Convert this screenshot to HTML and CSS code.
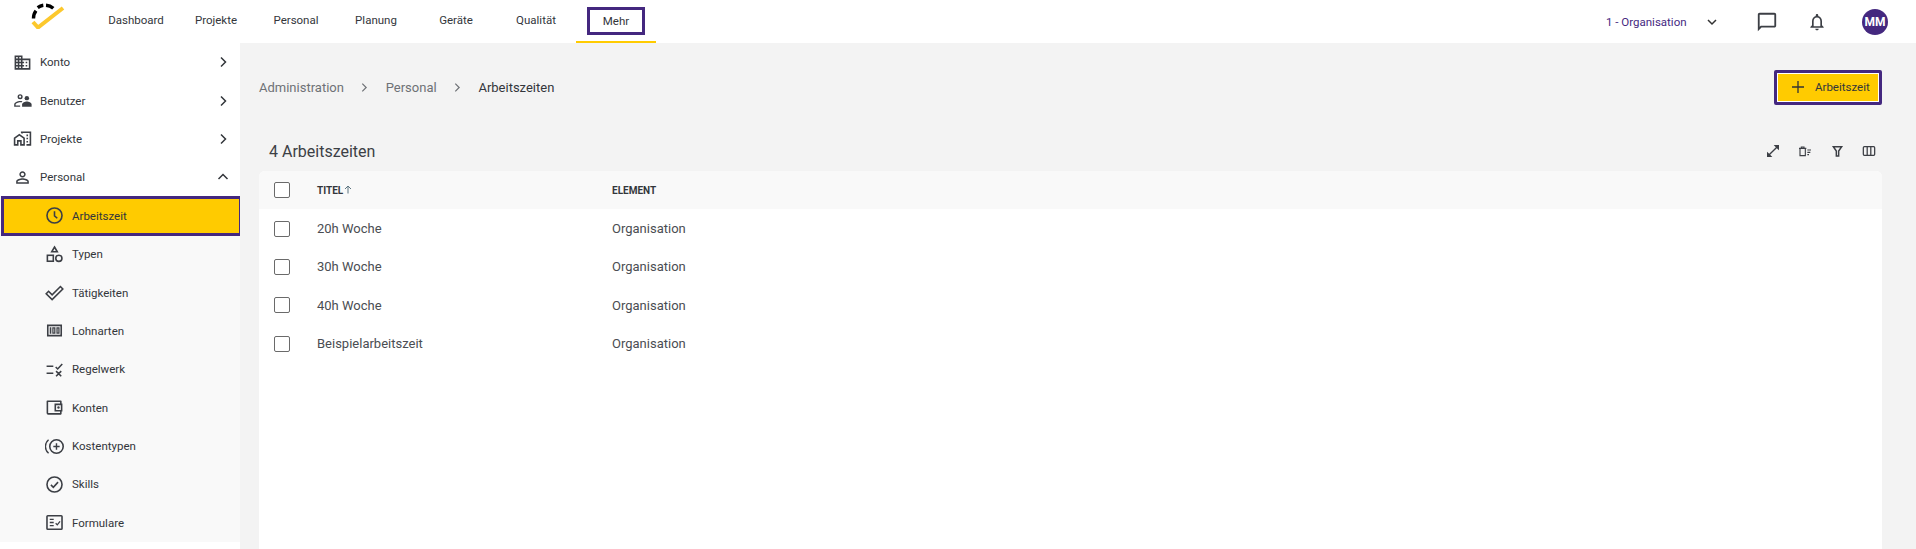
FILE: index.html
```html
<!DOCTYPE html>
<html lang="en">
<head>
  <meta charset="UTF-8">
  <title>Arbeitszeiten</title>
  <link rel="stylesheet" href="styles.css">
</head>
<body>

  <header class="topbar">
    <div class="logo">
      <svg width="34" height="26" viewBox="0 0 34 26" fill="none">
        <path d="M2.500 15.500 A12 12 0 0 1 5 7.700" stroke="#000" stroke-width="3.400"/>
        <path d="M6.700 4.600 A12 12 0 0 1 12.300 2.300" stroke="#000" stroke-width="3.400"/>
        <path d="M15 2.200 A12 12 0 0 1 22.300 5.300" stroke="#000" stroke-width="3.400"/>
        <path d="M2 19 L7 24.500 L32 5" stroke="#fcc82d" stroke-width="4"/>
      </svg>
    </div>
    <nav class="tabs">
      <div class="tab">Dashboard</div>
      <div class="tab">Projekte</div>
      <div class="tab">Personal</div>
      <div class="tab">Planung</div>
      <div class="tab">Geräte</div>
      <div class="tab">Qualität</div>
      <div class="tab tab-active"><span class="tab-box">Mehr</span></div>
    </nav>
    <div class="top-right">
      <div class="org">1 - Organisation</div>
      <svg class="org-arrow" width="14" height="14" viewBox="0 0 14 14" fill="none"><path d="M3 5 L7 9 L11 5" stroke="#333" stroke-width="1.500"/></svg>
      <svg class="chat" width="22" height="22" viewBox="0 0 24 24"><path fill="#3c3f45" d="M20 2H4c-1.100 0-2 .900-2 2v18l4-4h14c1.100 0 2-.900 2-2V4c0-1.100-.900-2-2-2zm0 14H5.170L4 17.170V4h16v12z"/></svg>
      <svg class="bell" width="20" height="20" viewBox="0 0 24 24"><path fill="#3c3f45" d="M12 22c1.100 0 2-.900 2-2h-4c0 1.100.900 2 2 2zm6-6v-5c0-3.070-1.630-5.640-4.500-6.320V4c0-.830-.670-1.500-1.500-1.500s-1.500.670-1.500 1.500v.680C7.640 5.360 6 7.920 6 11v5l-2 2v1h16v-1l-2-2zm-2 1H8v-6c0-2.480 1.510-4.500 4-4.500s4 2.020 4 4.500v6z"/></svg>
      <div class="avatar">MM</div>
    </div>
  </header>

  <div class="page">
    <aside class="sidebar">
      <div class="side-item">
        <svg class="side-icon" viewBox="0 0 24 24"><path d="M12 7V3H2v18h20V7H12zM6 19H4v-2h2v2zm0-4H4v-2h2v2zm0-4H4V9h2v2zm0-4H4V5h2v2zm4 12H8v-2h2v2zm0-4H8v-2h2v2zm0-4H8V9h2v2zm0-4H8V5h2v2zm10 12h-8v-2h2v-2h-2v-2h2v-2h-2V9h8v10zm-2-8h-2v2h2v-2zm0 4h-2v2h2v-2z"/></svg>
        <span class="side-label">Konto</span>
        <svg class="side-arrow" viewBox="0 0 14 14"><path d="M5 2.500 L9.500 7 L5 11.500"/></svg>
      </div>
      <div class="side-item">
        <svg class="side-icon" viewBox="0 0 24 24"><path fill-rule="evenodd" d="M9 4a3.200 3.200 0 1 0 0 6.400A3.200 3.200 0 0 0 9 4zm0 1.800a1.400 1.400 0 1 1 0 2.800 1.400 1.400 0 0 1 0-2.800z"/><path d="M9 12.500c-3 0-7.500 1.800-7.500 4.500v3H9v-1.800H3.300V17c0-1 3.400-2.700 5.700-2.700.5 0 1 .1 1.500.2l1.500-1.500c-1-.3-2-.5-3-.5z"/><circle cx="17.500" cy="9" r="2.800"/><path d="M17.500 13.200c-2.300 0-6 1.500-6 3.800v3h12v-3c0-2.300-3.700-3.800-6-3.800z"/></svg>
        <span class="side-label">Benutzer</span>
        <svg class="side-arrow" viewBox="0 0 14 14"><path d="M5 2.500 L9.500 7 L5 11.500"/></svg>
      </div>
      <div class="side-item">
        <svg class="side-icon" viewBox="0 0 24 24"><path d="M17 7h2v2h-2zM17 11h2v2h-2zM17 15h2v2h-2zM1 11v10h6v-5h2v5h6V11L8 6l-7 5zm12 8h-2v-5H5v5H3v-7l5-3.500 5 3.500v7zM10 3v1.970l2 1.430V5h9v14h-4v2h6V3z"/></svg>
        <span class="side-label">Projekte</span>
        <svg class="side-arrow" viewBox="0 0 14 14"><path d="M5 2.500 L9.500 7 L5 11.500"/></svg>
      </div>
      <div class="side-item">
        <svg class="side-icon" viewBox="0 0 24 24"><path d="M12 5.900c1.160 0 2.100.940 2.100 2.100s-.940 2.100-2.100 2.100S9.900 9.160 9.900 8s.940-2.100 2.100-2.100m0 9c2.970 0 6.100 1.460 6.100 2.100v1.100H5.900V17c0-.640 3.130-2.100 6.100-2.100M12 4C9.790 4 8 5.790 8 8s1.790 4 4 4 4-1.790 4-4-1.790-4-4-4zm0 9c-2.670 0-8 1.340-8 4v3h16v-3c0-2.660-5.330-4-8-4z"/></svg>
        <span class="side-label">Personal</span>
        <svg class="side-arrow" viewBox="0 0 14 14"><path d="M2.500 9 L7 4.500 L11.500 9"/></svg>
      </div>

      <div class="sub-list">
        <div class="sub-item sub-active">
          <svg class="sub-icon line" viewBox="0 0 24 24"><circle cx="12" cy="12" r="9.500"/><path d="M12 6.500V12.500L15.500 15.500"/></svg>
          <span>Arbeitszeit</span>
        </div>
        <div class="sub-item">
          <svg class="sub-icon line" viewBox="0 0 24 24"><path d="M12 2.500 L15.500 8.500 H8.500 Z"/><rect x="3" y="13" width="7.500" height="7.500"/><circle cx="17.500" cy="16.800" r="3.900"/></svg>
          <span>Typen</span>
        </div>
        <div class="sub-item">
          <svg class="sub-icon line" viewBox="0 0 24 24"><path d="M1.500 13.500 L4.500 10.500 L9 15 L19.500 4.500 L22.500 7.500 L9 21 Z"/></svg>
          <span>Tätigkeiten</span>
        </div>
        <div class="sub-item">
          <svg class="sub-icon" viewBox="0 0 24 24"><path fill-rule="evenodd" d="M2.500 4.500h19v15h-19zM4.500 6.500v11h15v-11z"/><path fill-rule="evenodd" d="M6 8h2v8H6zM9.200 8h4v8h-4zM10.800 9.600v4.800h.8V9.600zM14.400 8h4v8h-4zM16 9.600v4.800h.8V9.600z"/></svg>
          <span>Lohnarten</span>
        </div>
        <div class="sub-item">
          <svg class="sub-icon line" viewBox="0 0 24 24"><path d="M2 7.800H10.500M2 16.700H10.500M13.500 8.800L16 11.300L21.800 5M14 14L20.500 20.500M20.500 14L14 20.500" stroke-width="2"/></svg>
          <span>Regelwerk</span>
        </div>
        <div class="sub-item">
          <svg class="sub-icon" viewBox="0 0 24 24"><path fill-rule="evenodd" d="M3 3h17a1 1 0 0 1 1 1v3h1v10h-1v3a1 1 0 0 1-1 1H4a2 2 0 0 1-2-2V4a1 1 0 0 1 1-1zm1 2v14h15v-2h-7V7h7V5zm10 4v6h6V9z"/><circle cx="17" cy="12" r="1.500"/></svg>
          <span>Konten</span>
        </div>
        <div class="sub-item">
          <svg class="sub-icon line" viewBox="0 0 24 24"><circle cx="14.500" cy="12" r="8.500"/><path d="M14.500 8V16M10.500 12H18.500M4.500 3.500A11 11 0 0 0 4.500 20.500" stroke-width="1.800"/></svg>
          <span>Kostentypen</span>
        </div>
        <div class="sub-item">
          <svg class="sub-icon line" viewBox="0 0 24 24"><circle cx="12" cy="12" r="9.500"/><path d="M7.500 12.500L10.500 15.500L16.500 9"/></svg>
          <span>Skills</span>
        </div>
        <div class="sub-item">
          <svg class="sub-icon line" viewBox="0 0 24 24"><rect x="2.500" y="3.500" width="19" height="17" rx="1"/><path d="M6 8H11M6 12H11M6 16H11M13.500 13L15.500 15L19 10.500" stroke-width="1.600"/></svg>
          <span>Formulare</span>
        </div>
      </div>
    </aside>

    <main class="content">
      <div class="head-row">
        <div class="crumbs">
          <span>Administration</span>
          <svg class="crumb-sep" viewBox="0 0 10 10"><path d="M3 1.500 L6.500 5 L3 8.500"/></svg>
          <span>Personal</span>
          <svg class="crumb-sep" viewBox="0 0 10 10"><path d="M3 1.500 L6.500 5 L3 8.500"/></svg>
          <span class="crumb-current">Arbeitszeiten</span>
        </div>
        <button class="add-btn">
          <svg width="16" height="16" viewBox="0 0 16 16"><path d="M8 2V14M2 8H14" stroke="#333" stroke-width="1.300"/></svg>
          Arbeitszeit
        </button>
      </div>

      <div class="title-row">
        <div class="list-title">4 Arbeitszeiten</div>
        <div class="tools">
          <svg viewBox="0 0 24 24"><path fill="#3c3f45" d="M21 11V3h-8l3.290 3.290-10 10L3 13v8h8l-3.290-3.290 10-10z"/></svg>
          <svg viewBox="0 0 24 24" fill="none" stroke="#3c3f45" stroke-width="1.700"><path d="M3 8H14M6.500 8V6H10.500V8M4.500 8V19H12.500V8M15.500 10.500H21M15.500 14H20M15.500 17.500H18"/></svg>
          <svg viewBox="0 0 24 24" fill="none" stroke="#3c3f45" stroke-width="2.200"><path d="M6.500 5.500H19L14.500 12V19.500H11V12Z"/></svg>
          <svg viewBox="0 0 24 24" fill="none" stroke="#3c3f45" stroke-width="1.900"><rect x="3.500" y="5.500" width="17" height="13" rx="1.500"/><path d="M9.300 5.500V18.500M14.700 5.500V18.500"/></svg>
        </div>
      </div>

      <section class="table">
        <div class="row row-head">
          <div class="check"></div>
          <div class="cell-title">TITEL<svg width="8" height="9" viewBox="0 0 8 9" fill="none"><path d="M4 8.500V1M1 4L4 1L7 4" stroke="#5d7580" stroke-width="1"/></svg></div>
          <div>ELEMENT</div>
        </div>
        <div class="row">
          <div class="check"></div>
          <div>20h Woche</div>
          <div>Organisation</div>
        </div>
        <div class="row">
          <div class="check"></div>
          <div>30h Woche</div>
          <div>Organisation</div>
        </div>
        <div class="row">
          <div class="check"></div>
          <div>40h Woche</div>
          <div>Organisation</div>
        </div>
        <div class="row">
          <div class="check"></div>
          <div>Beispielarbeitszeit</div>
          <div>Organisation</div>
        </div>
      </section>
    </main>
  </div>

</body>
</html>
```

FILE: styles.css
```css
html, body {
  margin: 0;
  padding: 0;
  height: 549px;
  overflow: hidden;
  background-color: #fff;
  color: #3c3f45;
  font-family: Roboto, sans-serif;
  font-size: 11.5px;
}

body {
  display: flex;
  flex-direction: column;
}

/* top bar */
.topbar {
  display: flex;
  align-items: center;
  height: 43px;
  flex-shrink: 0;
  background-color: #fff;
}

.logo {
  width: 96px;
  height: 43px;
  box-sizing: border-box;
  padding: 3px 0 0 31px;
}

.tabs {
  display: flex;
  height: 43px;
}

.tab {
  width: 80px;
  height: 43px;
  box-sizing: border-box;
  display: flex;
  align-items: center;
  justify-content: center;
  padding-bottom: 3px;
  color: #33363b;
}

.tab-active {
  border-bottom: 2px solid #ffcb00;
  padding-bottom: 0;
  align-items: flex-start;
  padding-top: 7px;
}

.tab-box {
  width: 58px;
  height: 28px;
  box-sizing: border-box;
  border: 3px solid #44287f;
  display: flex;
  align-items: center;
  justify-content: center;
}

.top-right {
  display: flex;
  align-items: center;
  margin-left: auto;
  padding-right: 28px;
}

.org {
  color: #44287f;
  width: 99px;
}

.org-arrow {
  margin-right: 37px;
}

.chat {
  margin-right: 29px;
}

.bell {
  margin-right: 35px;
}

.avatar {
  width: 26px;
  height: 26px;
  border-radius: 50%;
  background-color: #44287f;
  color: #fff;
  font-weight: 700;
  font-size: 12px;
  display: flex;
  align-items: center;
  justify-content: center;
}

/* below the bar */
.page {
  display: flex;
  flex: 1;
  min-height: 0;
}

.sidebar {
  width: 240px;
  flex-shrink: 0;
  background-color: #fff;
}

.side-item {
  height: 38.4px;
  display: flex;
  align-items: center;
  padding: 0 10px 0 13px;
  color: #33363b;
}

.side-icon {
  width: 19px;
  height: 19px;
  fill: #3c3f45;
  margin-right: 8px;
}

.side-label {
  flex: 1;
}

.side-arrow {
  width: 14px;
  height: 14px;
  fill: none;
  stroke: #33363b;
  stroke-width: 1.5;
}

.sub-list {
  background-color: #f9f9f9;
}

.sub-item {
  height: 38.4px;
  box-sizing: border-box;
  display: flex;
  align-items: center;
  padding-left: 45px;
  color: #33363b;
}

.sub-active {
  width: 241px;
  height: 40.4px;
  margin: -1px 0 -1px 1px;
  padding-left: 41px;
  background-color: #ffcb00;
  border: 3px solid #44287f;
}

.sub-icon {
  width: 19px;
  height: 19px;
  margin-right: 8px;
  fill: #3c3f45;
}

.sub-icon.line {
  fill: none;
  stroke: #3c3f45;
  stroke-width: 2;
}

.content {
  flex: 1;
  min-width: 0;
  display: flex;
  flex-direction: column;
  background-color: #f3f3f3;
  padding: 0 34px 0 19px;
}

.head-row {
  display: flex;
  align-items: center;
  justify-content: space-between;
  height: 88px;
  flex-shrink: 0;
}

.crumbs {
  display: flex;
  align-items: center;
  font-size: 13px;
  color: #6e7176;
}

.crumb-sep {
  width: 11px;
  height: 11px;
  margin: 0 15.4px;
  fill: none;
  stroke: #6e7176;
  stroke-width: 1.1;
}

.crumb-current {
  color: #33363b;
}

.add-btn {
  display: flex;
  align-items: center;
  gap: 9px;
  width: 108px;
  height: 35px;
  box-sizing: border-box;
  padding: 0 0 0 13px;
  border: 3px solid #44287f;
  border-radius: 2px;
  outline: 1px solid #fff;
  outline-offset: -4px;
  background-color: #ffcb00;
  color: #33363b;
  font-family: Roboto, sans-serif;
  font-size: 11.5px;
}

.title-row {
  display: flex;
  align-items: center;
  justify-content: space-between;
  height: 40px;
  flex-shrink: 0;
  padding: 0 5px 0 10px;
}

.list-title {
  font-size: 16px;
  color: #3c3f45;
}

.tools {
  display: flex;
  gap: 16px;
}

.tools svg {
  width: 16px;
  height: 16px;
}

.table {
  flex: 1;
  background-color: #fff;
  border-radius: 6px 6px 0 0;
}

.row {
  display: grid;
  grid-template-columns: 58px 295px 1fr;
  align-items: center;
  height: 38.4px;
  font-size: 13px;
  color: #4a4d52;
}

.row .check {
  margin-left: 15px;
}

.row-head {
  background-color: #f9f9f9;
  border-radius: 6px 6px 0 0;
  font-size: 10px;
  font-weight: 700;
  color: #33363b;
}

.check {
  width: 16px;
  height: 16px;
  box-sizing: border-box;
  border: 1px solid #6a6a6a;
  border-radius: 2px;
  background-color: #fff;
}

.cell-title svg {
  margin-left: 1px;
}
```
